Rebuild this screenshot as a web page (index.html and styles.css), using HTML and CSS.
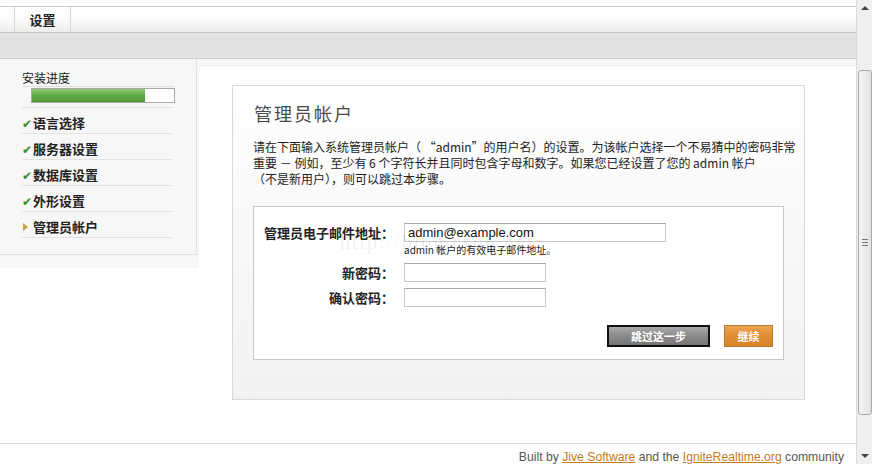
FILE: index.html
```html
<!DOCTYPE html>
<html>
<head>
    <meta charset="utf-8">
    <title>设置 - 管理员帐户</title>
    <link rel="stylesheet" href="styles.css">
</head>
<body>
<div class="screen">
    <div class="page">
        <div class="topbar">
            <div class="tab">设置</div>
        </div>
        <div class="subbar"></div>

        <div class="content">
            <div class="sidebar">
                <div class="side-box">
                    <div class="progress-label">安装进度</div>
                    <div class="progress"><div class="progress-fill"></div></div>
                    <ul class="steps">
                        <li class="done">语言选择</li>
                        <li class="done">服务器设置</li>
                        <li class="done">数据库设置</li>
                        <li class="done">外形设置</li>
                        <li class="current">管理员帐户</li>
                    </ul>
                </div>
            </div>

            <div class="main">
                <div class="panel">
                    <h1>管理员帐户</h1>
                    <p class="intro">请在下面输入系统管理员帐户（ “admin”的用户名）的设置。为该帐户选择一个不易猜中的密码非常重要 － 例如，至少有 6 个字符长并且同时包含字母和数字。如果您已经设置了您的 admin 帐户<br>（不是新用户），则可以跳过本步骤。</p>

                    <div class="form-box">
                        <div class="row">
                            <label>管理员电子邮件地址：</label>
                            <div class="field">
                                <input type="text" class="input wide" value="admin@example.com">
                                <div class="hint">admin 帐户的有效电子邮件地址。</div>
                            </div>
                        </div>
                        <div class="row">
                            <label>新密码：</label>
                            <div class="field"><input type="password" class="input"></div>
                        </div>
                        <div class="row">
                            <label>确认密码：</label>
                            <div class="field"><input type="password" class="input"></div>
                        </div>
                        <div class="buttons">
                            <button class="btn skip">跳过这一步</button>
                            <button class="btn next">继续</button>
                        </div>
                        <div class="watermark">http://blog.csdn.net/</div>
                    </div>
                </div>
            </div>
        </div>

        <div class="footer">
            Built by <a href="#">Jive Software</a> and the <a href="#">IgniteRealtime.org</a> community
        </div>
    </div>

    <div class="scrollbar">
        <div class="arrow up"></div>
        <div class="thumb"><span></span><span></span><span></span></div>
        <div class="arrow down"></div>
    </div>
</div>
</body>
</html>
```

FILE: styles.css
```css
body {
    margin: 0;
    font-family: "Liberation Sans", "Noto Sans CJK SC", sans-serif;
    font-size: 12px;
    color: #333;
    background: #fff;
    overflow: hidden;
}
.screen {
    display: flex;
    width: 872px;
    height: 464px;
}
.page {
    width: 856px;
    display: flex;
    flex-direction: column;
}

/* header */
.topbar {
    margin-top: 6px;
    height: 25px;
    border-top: 1px solid #c8c8c8;
    border-bottom: 1px solid #c4c4c4;
    background: linear-gradient(#fff, #fdfdfd 40%, #ececec);
    display: flex;
}
.tab {
    margin-left: 14px;
    width: 55px;
    border-left: 1px solid #d6d6d6;
    border-right: 1px solid #d6d6d6;
    text-align: center;
    line-height: 25px;
    font-family: "Noto Sans CJK SC", sans-serif;
    font-size: 13px;
    font-weight: bold;
    color: #222;
}
.subbar {
    height: 25px;
    background: #e2e2e2;
    border-bottom: 1px solid #cfcfcf;
}

/* content */
.content {
    display: flex;
    align-items: flex-start;
    height: 384px;
    background: linear-gradient(#f7f7f7 0, #f7f7f7 6px, #fff 6px);
}
.sidebar {
    width: 199px;
    height: 209px;
    background: #f7f7f7;
}
.side-box {
    width: 197px;
    height: 196px;
    border-right: 1px solid #e2e2e2;
    border-bottom: 1px solid #e2e2e2;
    box-sizing: border-box;
    padding: 10px 0 0 22px;
}
.progress-label {
    font-family: "Noto Sans CJK SC", sans-serif;
    font-size: 12px;
    line-height: 17px;
    width: 152px;
    border-bottom: 1px solid #e0e0e0;
    color: #222;
}
.progress {
    margin: 1px 0 0 9px;
    width: 142px;
    height: 13px;
    border: 1px solid #a8a8a8;
    background: #fff;
}
.progress-fill {
    width: 113px;
    height: 13px;
    background: linear-gradient(#8ecb74, #5fa846 50%, #4f9a3a);
}
.steps {
    list-style: none;
    margin: 4px 0 0;
    padding: 0;
    width: 150px;
    border-top: 1px solid #e0e0e0;
}
.steps li {
    height: 25px;
    line-height: 29px;
    border-bottom: 1px solid #e2e2e2;
    font-family: "Noto Sans CJK SC", sans-serif;
    font-size: 13px;
    font-weight: bold;
    color: #222;
}
.steps li.done:before {
    content: "✔";
    color: #3d8a2a;
    font-size: 12px;
    font-weight: normal;
    margin-right: 1px;
}
.steps li.current:before {
    content: "";
    display: inline-block;
    border-left: 5px solid #c9a033;
    border-top: 4px solid transparent;
    border-bottom: 4px solid transparent;
    margin: 0 5px 1px 1px;
}

.main {
    flex: 1;
    margin-top: 6px;
    height: 378px;
    background: #fff;
    border-top: 1px solid #ececec;
}
.panel {
    margin: 19px 0 0 33px;
    width: 573px;
    height: 315px;
    box-sizing: border-box;
    border: 1px solid #d9d9d9;
    background: linear-gradient(#fff, #f9f9f9 40%, #f2f2f2);
    padding: 0 20px;
}
.panel h1 {
    margin: 16px 0 0 1px;
    font-family: "Noto Sans CJK SC", sans-serif;
    font-size: 18px;
    font-weight: normal;
    color: #4a4a4a;
    letter-spacing: 2px;
    line-height: 22px;
}
.intro {
    margin: 15px 0 0;
    font-family: "Noto Sans CJK SC", sans-serif;
    font-size: 12px;
    line-height: 16px;
    color: #222;
    width: 545px;
}

.form-box {
    position: relative;
    margin-top: 19px;
    height: 154px;
    box-sizing: border-box;
    border: 1px solid #c8c8c8;
    background: #fff;
    padding-top: 16px;
}
.row {
    display: flex;
    align-items: flex-start;
    margin-bottom: 6px;
}
.row label {
    width: 140px;
    text-align: right;
    font-family: "Noto Sans CJK SC", sans-serif;
    font-size: 13px;
    font-weight: bold;
    color: #222;
    line-height: 19px;
}
.field {
    margin-left: 10px;
}
.input {
    width: 142px;
    height: 19px;
    box-sizing: border-box;
    border: 1px solid #c6c6c6;
    border-top-color: #a9a9a9;
    padding: 0 3px;
    font-family: "Liberation Sans", sans-serif;
    font-size: 13px;
    color: #111;
    display: block;
    margin: 0;
}
.input.wide {
    width: 262px;
}
.hint {
    font-family: "Noto Sans CJK SC", sans-serif;
    font-size: 10px;
    line-height: 15px;
    color: #222;
}
.buttons {
    display: flex;
    justify-content: flex-end;
    gap: 14px;
    margin: 18px 10px 0 0;
}
.btn {
    height: 22px;
    box-sizing: border-box;
    font-family: "Noto Sans CJK SC", sans-serif;
    font-size: 11px;
    font-weight: bold;
    color: #fff;
    padding: 0;
}
.btn.skip {
    width: 103px;
    border: 2px solid #111;
    background: linear-gradient(#a9a9a9, #8a8a8a 50%, #767676);
}
.btn.next {
    width: 49px;
    border: 1px solid #b97a34;
    background: linear-gradient(#eba453, #e08c32 50%, #d98428);
}
.watermark {
    position: absolute;
    left: 86px;
    top: 24px;
    font-family: "Liberation Serif", serif;
    font-size: 20px;
    letter-spacing: 2px;
    color: rgba(0, 0, 0, 0.08);
    pointer-events: none;
}

/* footer */
.footer {
    border-top: 1px solid #dcdcdc;
    text-align: right;
    padding: 6px 12px 0 0;
    font-size: 12.2px;
    color: #555;
}
.footer a {
    color: #c67a24;
}

/* fake scrollbar */
.scrollbar {
    width: 16px;
    background: #efefef;
    border-left: 1px solid #dadada;
    box-sizing: border-box;
    display: flex;
    flex-direction: column;
    align-items: center;
}
.arrow {
    width: 0;
    height: 0;
    border-left: 4px solid transparent;
    border-right: 4px solid transparent;
}
.arrow.up {
    margin-top: 6px;
    border-bottom: 4px solid #444;
}
.arrow.down {
    margin-top: auto;
    margin-bottom: 6px;
    border-top: 4px solid #444;
}
.thumb {
    margin-top: 60px;
    width: 14px;
    height: 345px;
    box-sizing: border-box;
    border: 1px solid #a8a8a8;
    border-radius: 3px;
    background: linear-gradient(90deg, #f4f4f4, #e2e2e2);
    display: flex;
    flex-direction: column;
    justify-content: center;
    align-items: center;
    gap: 2px;
}
.thumb span {
    width: 6px;
    height: 1px;
    background: #777;
}
```
